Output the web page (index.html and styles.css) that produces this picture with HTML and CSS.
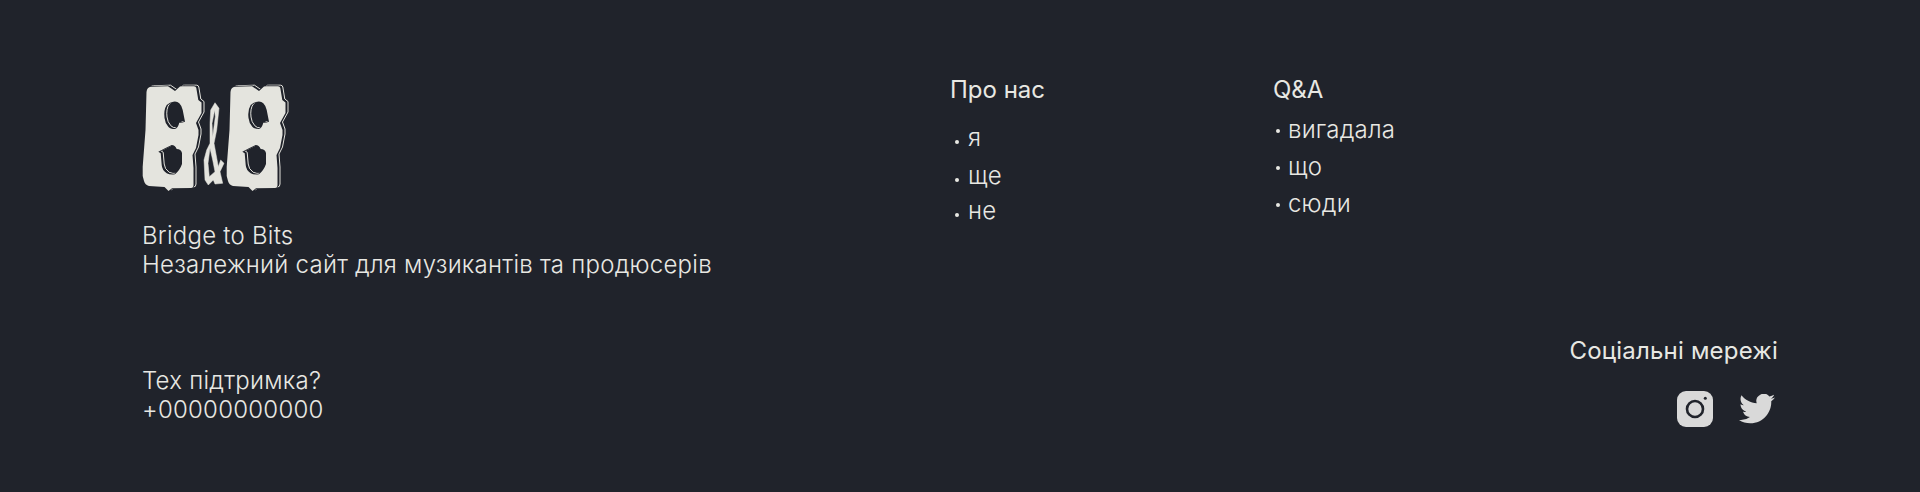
FILE: index.html
```html
<!DOCTYPE html>
<html lang="uk">
<head>
<meta charset="utf-8">
<title>Bridge to Bits</title>
<link rel="stylesheet" href="styles.css">
</head>
<body>
<footer class="footer">
  <div class="top">
    <div class="brand">
      <svg class="logo" width="150" height="112" viewBox="0 0 150 112">
        <defs>
          <path id="block" fill-rule="evenodd" d="M4.500 8Q5 3 9 2.800L26 2.200L33 7L38 2.600Q38.500 2.200 40 2.200H52Q54 2.200 54.300 4L56.300 16L59.500 18.500V29L54 39L56.500 46V51L54 64L50.500 71L51.500 84V101Q51.500 104 49 104L30 104.300L26.500 107L22.500 103L7 102Q3 101 2 97L.7 92V82.700L3.500 46ZM24.700 21Q28 18 31.300 17.700Q35 17 37.300 19.300Q40 22 40.700 26L43 37.700Q40 39 37.300 38.700Q36 44 33 45Q28 45 26.300 42.700Q23 39 22.500 34Q21.500 26 24.700 21ZM23 64.300L29.700 61Q33 61 34.700 65Q39 65 40 69V80Q38 86 33 90.300Q28 91 24.700 89.300Q20 86 19.700 81L18.700 69.300L16.300 67.700Z"/>
          <g id="letter">
            <use href="#block" class="logo-line" transform="translate(2.500 -1)"/>
            <use href="#block" class="logo-fill"/>
          </g>
        </defs>
        <use href="#letter"/>
        <use href="#letter" transform="translate(84 0)"/>
        <path class="logo-amp" fill-rule="evenodd" d="M68 59.300V39.300L68.700 26L73 18.700L77 24.300L74.700 46L72 59.300L76.300 82.700L78.700 76L82 79.300L78 87.700L80.700 99.300L73 100L71.300 96L66.300 101L63 96L62 76L64.700 66ZM72.700 26L73.300 32.700L70.700 52.700L70 39.300ZM68 64.300L70.700 76L73 87.700L67.300 92.700L66 79.300Z"/>
      </svg>
      <p class="text brand-text">Bridge to Bits<br>Незалежний сайт для музикантів та продюсерів</p>
    </div>
    <nav class="col">
      <h3 class="col-title">Про нас</h3>
      <ul class="list list-about">
        <li>я</li>
        <li>ще</li>
        <li>не</li>
      </ul>
    </nav>
    <nav class="col">
      <h3 class="col-title">Q&amp;A</h3>
      <ul class="list list-qa">
        <li>вигадала</li>
        <li>що</li>
        <li>сюди</li>
      </ul>
    </nav>
  </div>
  <div class="bottom">
    <p class="text">Тех підтримка?<br>+00000000000</p>
    <div class="social">
      <h3 class="social-title">Соціальні мережі</h3>
      <div class="icons">
        <svg width="36" height="36" viewBox="0 0 36 36">
          <rect width="36" height="36" rx="9" fill="#d9d9d9"/>
          <circle cx="18" cy="18" r="8" fill="none" stroke="#20232b" stroke-width="2.600"/>
          <circle cx="28.300" cy="7.300" r="1.500" fill="#20232b"/>
        </svg>
        <svg width="36" height="30" viewBox="0 0 24 20">
          <path fill="#d9d9d9" d="M24 2.400c-.9.400-1.800.700-2.800.800 1-.6 1.800-1.600 2.200-2.700-1 .6-2 1-3.100 1.200A4.900 4.900 0 0 0 11.800 6.200C7.700 6 4.100 4 1.700.9c-1.300 2.200-.7 5.100 1.500 6.600-.8 0-1.600-.2-2.200-.6 0 2.300 1.600 4.400 3.900 4.900-.7.200-1.500.2-2.200.1.600 2 2.400 3.400 4.600 3.400A9.900 9.900 0 0 1 0 17.300 14 14 0 0 0 7.500 19.500c9.100 0 14.300-7.700 14-14.600 1-.7 1.800-1.500 2.500-2.500z"/>
        </svg>
      </div>
    </div>
  </div>
</footer>
</body>
</html>
```
FILE: styles.css
```css
* { box-sizing: border-box; }
html, body { margin: 0; height: 100%; }
body {
  background: #20232b;
  color: #e8e8e3;
  font-family: Inter, "Liberation Sans", sans-serif;
}
.footer {
  height: 492px;
  padding: 75px 142px 0;
  display: flex;
  flex-direction: column;
}
.top { display: flex; height: 261px; }
.brand { width: 808px; padding-top: 9px; }
.logo { display: block; }
.logo-line { fill: none; stroke: #e4e4de; stroke-width: 1; stroke-linejoin: round; }
.logo-fill { fill: #e4e4de; stroke: #20232b; stroke-width: 1.500; stroke-linejoin: round; paint-order: stroke; }
.logo-amp { fill: #e4e4de; stroke: #e4e4de; stroke-width: .5; stroke-linejoin: round; }
.text { margin: 0; font-size: 24px; line-height: 29px; font-weight: 300; letter-spacing: .24px; }
.brand-text { margin-top: 25px; }
.col { width: 323px; }
.col-title { margin: 0; font-size: 24px; line-height: 29px; font-weight: 400; }
.social-title { margin: 0; font-size: 24px; line-height: 29px; font-weight: 400; letter-spacing: .2px; }
.list { margin: 0; padding: 0 0 0 15px; font-size: 24px; line-height: 29px; font-weight: 300; letter-spacing: .2px; list-style: none; }
.list li { position: relative; }
.list li::before {
  content: "";
  position: absolute;
  left: -12px;
  top: 14px;
  width: 4px;
  height: 4px;
  border-radius: 50%;
  background: #e8e8e3;
}
.list-about { margin-top: 19px; padding-left: 18px; }
.list-about li::before { left: -13px; top: 17px; }
.list-about li:nth-child(2) { margin-top: 9px; }
.list-about li:nth-child(3) { margin-top: 6px; }
.list-qa { margin-top: 11px; }
.list-qa li + li { margin-top: 8px; }
.bottom { display: flex; justify-content: space-between; align-items: flex-start; }
.bottom > .text { margin-top: 30px; }
.social { display: flex; flex-direction: column; align-items: flex-end; }
.icons { display: flex; align-items: center; gap: 26px; margin-top: 26px; padding-right: 3px; }
```
